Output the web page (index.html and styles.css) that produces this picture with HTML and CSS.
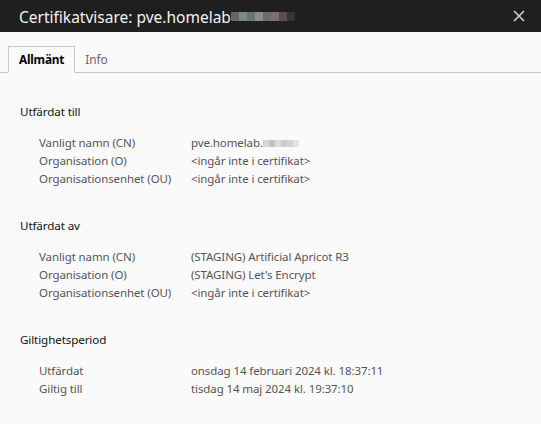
FILE: index.html
```html
<!DOCTYPE html>
<html lang="sv">
<head>
<meta charset="utf-8">
<title>Certifikatvisare</title>
<link rel="stylesheet" href="styles.css">
</head>
<body>
<div class="titlebar">
  <div class="title">Certifikatvisare: pve.homelab<span class="blur blur-title"><i></i><i></i><i></i><i></i><i></i><i></i><i></i><i></i></span></div>
  <svg class="close" width="12" height="12" viewBox="0 0 12 12"><path d="M1 1L11 11M11 1L1 11" stroke="#cfcfcf" stroke-width="1.6" fill="none"/></svg>
</div>
<div class="tabs">
  <div class="tab active">Allmänt</div>
  <div class="tab">Info</div>
  <div class="tab-rest"></div>
</div>
<div class="content">
  <section class="sec">
    <h2 class="heading">Utfärdat till</h2>
    <div class="rows">
      <div class="label">Vanligt namn (CN)</div><div class="value">pve.homelab.<span class="blur blur-val"><i></i><i></i><i></i><i></i><i></i><i></i></span></div>
      <div class="label">Organisation (O)</div><div class="value">&lt;ingår inte i certifikat&gt;</div>
      <div class="label">Organisationsenhet (OU)</div><div class="value">&lt;ingår inte i certifikat&gt;</div>
    </div>
  </section>
  <section class="sec">
    <h2 class="heading">Utfärdat av</h2>
    <div class="rows">
      <div class="label">Vanligt namn (CN)</div><div class="value">(STAGING) Artificial Apricot R3</div>
      <div class="label">Organisation (O)</div><div class="value">(STAGING) Let's Encrypt</div>
      <div class="label">Organisationsenhet (OU)</div><div class="value">&lt;ingår inte i certifikat&gt;</div>
    </div>
  </section>
  <section class="sec">
    <h2 class="heading">Giltighetsperiod</h2>
    <div class="rows">
      <div class="label">Utfärdat</div><div class="value">onsdag 14 februari 2024 kl. 18:37:11</div>
      <div class="label">Giltig till</div><div class="value">tisdag 14 maj 2024 kl. 19:37:10</div>
    </div>
  </section>
</div>
</body>
</html>
```
FILE: styles.css
```css
html, body {
  margin: 0;
  padding: 0;
  background: #fafafa;
  font-family: "Noto Sans", "Open Sans", sans-serif;
}
.titlebar {
  height: 32px;
  background: #1f1f1f;
  display: flex;
  align-items: center;
  justify-content: space-between;
  padding: 0 16px 0 19px;
}
.title {
  color: #f2f2f2;
  font-size: 15.5px;
  display: flex;
  align-items: center;
  padding-top: 1px;
}
.blur {
  display: inline-flex;
}
.blur i {
  display: block;
}
.blur-title i { width: 8px; height: 9px; }
.blur-title i:nth-child(1) { background: #5e6a66; }
.blur-title i:nth-child(2) { background: #7d8783; }
.blur-title i:nth-child(3) { background: #6c7470; }
.blur-title i:nth-child(4) { background: #8d8c8a; }
.blur-title i:nth-child(5) { background: #6f6a69; }
.blur-title i:nth-child(6) { background: #7a716f; }
.blur-title i:nth-child(7) { background: #5a4f4e; }
.blur-title i:nth-child(8) { background: #3a3332; }
.blur-val i { width: 6px; height: 7px; }
.blur-val i:nth-child(1) { background: #d6d6d6; }
.blur-val i:nth-child(2) { background: #c4c4c4; }
.blur-val i:nth-child(3) { background: #dcdcdc; }
.blur-val i:nth-child(4) { background: #cbcbcb; }
.blur-val i:nth-child(5) { background: #d3d3d3; }
.blur-val i:nth-child(6) { background: #e3e3e3; }
.close { display: block; }
.tabs {
  display: flex;
  align-items: flex-end;
  padding-top: 14px;
}
.tabs::before {
  content: "";
  width: 8px;
  border-bottom: 1px solid #c8c8c8;
}
.tab {
  height: 25px;
  line-height: 25px;
  font-size: 11.8px;
  color: #666;
  padding: 0 11px 0 10px;
  border-bottom: 1px solid #c8c8c8;
}
.tab.active {
  color: #000;
  font-weight: 700;
  border: 1px solid #c8c8c8;
  border-bottom-color: transparent;
  background: #fafafa;
  padding: 0 10px;
  letter-spacing: -0.2px;
}
.tab-rest {
  flex: 1;
  border-bottom: 1px solid #c8c8c8;
}
.content {
  padding: 30px 0 0 20px;
}
.sec {
  margin-bottom: 29px;
}
.heading {
  margin: 0 0 13px;
  font-size: 11.6px;
  font-weight: 400;
  line-height: 18px;
  color: #111;
  letter-spacing: -0.1px;
}
.rows {
  display: grid;
  grid-template-columns: 152px auto;
  padding-left: 19px;
  font-size: 11.5px;
  letter-spacing: -0.1px;
  line-height: 18px;
  color: #555;
}
.value {
  display: flex;
  align-items: center;
}
```
